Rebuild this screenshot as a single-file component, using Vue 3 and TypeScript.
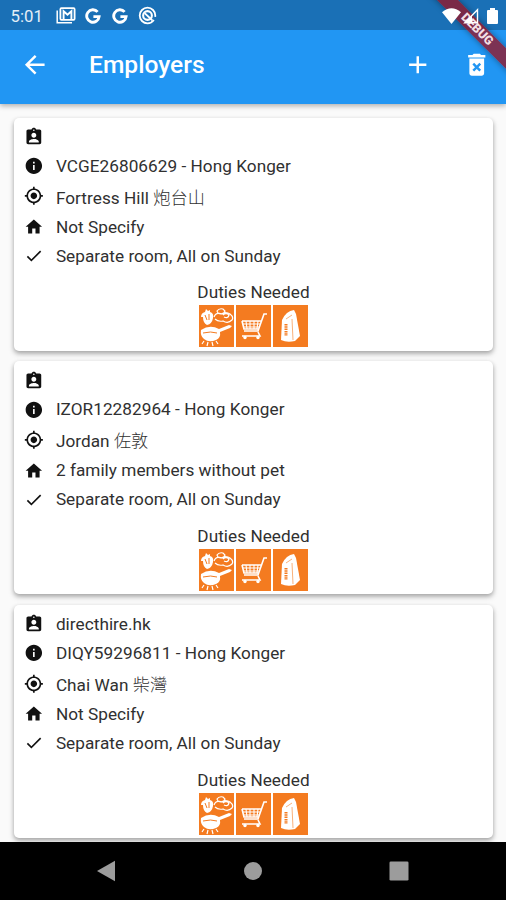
<script setup lang="ts">
type IconName = 'badge' | 'info' | 'location' | 'home' | 'check'

interface Row {
  icon: IconName
  text: string
  cjk?: string
}

interface Employer {
  id: string
  rows: Row[]
}

const paths: Record<IconName, string> = {
  badge:
    'M19 3h-4.18C14.4 1.84 13.3 1 12 1c-1.3 0-2.4.84-2.82 2H5c-1.1 0-2 .9-2 2v14c0 1.1.9 2 2 2h14c1.1 0 2-.9 2-2V5c0-1.1-.9-2-2-2zm-7 0c.55 0 1 .45 1 1s-.45 1-1 1-1-.45-1-1 .45-1 1-1zm0 4c1.66 0 3 1.34 3 3s-1.34 3-3 3-3-1.34-3-3 1.34-3 3-3zm6 12H6v-1.4c0-2 4-3.1 6-3.1s6 1.1 6 3.1V19z',
  info: 'M12 2C6.48 2 2 6.48 2 12s4.48 10 10 10 10-4.48 10-10S17.52 2 12 2zm1 15h-2v-6h2v6zm0-8h-2V7h2v2z',
  location:
    'M12 8c-2.21 0-4 1.79-4 4s1.79 4 4 4 4-1.79 4-4-1.79-4-4-4zm8.94 3c-.46-4.17-3.77-7.48-7.94-7.94V1h-2v2.06C6.83 3.52 3.52 6.83 3.06 11H1v2h2.06c.46 4.17 3.77 7.48 7.94 7.94V23h2v-2.06c4.17-.46 7.48-3.77 7.94-7.94H23v-2h-2.06zM12 19c-3.87 0-7-3.13-7-7s3.13-7 7-7 7 3.13 7 7-3.13 7-7 7z',
  home: 'M10 20v-6h4v6h5v-8h3L12 3 2 12h3v8z',
  check: 'M9 16.17L4.83 12l-1.42 1.41L9 19 21 7l-1.41-1.41z',
}

const makeEmployer = (id: string, name: string, place: string, cjk: string, family: string): Employer => ({
  id,
  rows: [
    { icon: 'badge', text: name },
    { icon: 'info', text: `${id} - Hong Konger` },
    { icon: 'location', text: `${place} `, cjk },
    { icon: 'home', text: family },
    { icon: 'check', text: 'Separate room, All on Sunday' },
  ],
})

const employers: Employer[] = [
  makeEmployer('VCGE26806629', '', 'Fortress Hill', '炮台山', 'Not Specify'),
  makeEmployer('IZOR12282964', '', 'Jordan', '佐敦', '2 family members without pet'),
  makeEmployer('DIQY59296811', 'directhire.hk', 'Chai Wan', '柴灣', 'Not Specify'),
]
</script>

<template>
  <div class="screen">
    <header class="top">
      <div class="status">
        <span class="time">5:01</span>
        <svg class="mail" viewBox="0 0 20 17">
          <path d="M1.2 3.5V15.8H16" fill="none" stroke="currentColor" stroke-width="1.5" />
          <rect x="4.4" y="1.2" width="14.2" height="11.6" rx="1" fill="none" stroke="currentColor" stroke-width="1.8" />
          <path d="M7.6 12V4.2l3.9 3.5 3.9-3.5V12" fill="none" stroke="currentColor" stroke-width="1.9" />
        </svg>
        <svg v-for="n in 2" :key="n" class="g" viewBox="0 0 16 16">
          <path d="M12.6 3.9A6.2 6.2 0 1 0 14.1 8.6H8.4" fill="none" stroke="currentColor" stroke-width="2.9" />
        </svg>
        <svg class="at" viewBox="0 0 20 20">
          <circle cx="10" cy="10" r="8.2" fill="none" stroke="currentColor" stroke-width="1.9" stroke-dasharray="48 3.5" stroke-dashoffset="-5" />
          <circle cx="10" cy="10" r="4.6" fill="none" stroke="currentColor" stroke-width="2.2" />
          <path d="M7 7.5l8 7.5" stroke="currentColor" stroke-width="2" />
        </svg>
        <span class="grow"></span>
        <svg class="wifi" viewBox="0 0 19 16"><path d="M0 4.3Q9.5-3.6 19 4.3L9.5 16z" /></svg>
        <svg class="signal" viewBox="0 0 16 16">
          <path d="M14.5 1.8V14.8H1.8z" fill="none" stroke="currentColor" stroke-width="1.4" />
          <path d="M9 7.4V15H1.5z" />
        </svg>
        <svg class="battery" viewBox="0 0 11 16"><path d="M3 0h5v2h2q1 0 1 1v12q0 1-1 1H1q-1 0-1-1V3q0-1 1-1h2z" /></svg>
      </div>
      <div class="bar">
        <svg class="action" viewBox="0 0 24 24"><path d="M20 11H7.83l5.59-5.59L12 4l-8 8 8 8 1.41-1.41L7.83 13H20v-2z" /></svg>
        <h1>Employers</h1>
        <svg class="action add" viewBox="0 0 24 24"><path d="M19 13h-6v6h-2v-6H5v-2h6V5h2v6h6v2z" /></svg>
        <svg class="action" viewBox="0 0 24 24">
          <path d="M6 19c0 1.1.9 2 2 2h8c1.1 0 2-.9 2-2V7H6v12zm2.46-7.12l1.41-1.41L12 12.59l2.12-2.12 1.41 1.41L13.41 14l2.12 2.12-1.41 1.41L12 15.41l-2.12 2.12-1.41-1.41L10.59 14l-2.13-2.12zM15.5 4l-1-1h-5l-1 1H5v2h14V4z" />
        </svg>
      </div>
      <div class="debug">DEBUG</div>
    </header>

    <main class="list">
      <article v-for="e in employers" :key="e.id" class="card">
        <div v-for="r in e.rows" :key="r.icon" class="row" :class="r.icon">
          <svg class="icon" viewBox="0 0 24 24"><path :d="paths[r.icon]" /></svg>
          <span>{{ r.text }}<span v-if="r.cjk" class="cjk">{{ r.cjk }}</span></span>
        </div>
        <div class="duties">
          <p>Duties Needed</p>
          <div class="tiles">
            <svg class="tile" viewBox="0 0 35 42">
              <rect width="35" height="42" fill="#f47b20" />
              <g fill="#fff">
                <path d="M2 12q0-4 4-5l1-3 2 2 2-1v2q4 1 3 6-1 6-6 7-4-2-4-8z" />
                <path d="M2 25q9-6 18-1l10-4 3 1-2 2-10 4q1 6-4 8-7 3-12-1-4-3-3-9z" />
              </g>
              <g fill="none" stroke="#fff" stroke-width="1.2">
                <path d="M15 12q2-5 7-3 5-3 9 0 4 3 2 6-4 4-9 1-5 1-8-2M18 6q2-3 6-2l2 2-2 3-5-1zM24 10q3-3 6 0-1 4-5 2" />
                <path d="M5 36l-2 3M9 37l-1 4M13 37l1 4M17 36l2 3" />
              </g>
              <g fill="none" stroke="#f47b20" stroke-width="1"><path d="M6 10l2 5M10 9v6M4 28q8-2 14 0" /></g>
            </svg>
            <svg class="tile" viewBox="0 0 35 42">
              <rect width="35" height="42" fill="#f47b20" />
              <g fill="none" stroke="#fff">
                <path stroke-width="1.6" d="M31 9h-3l-6 17H8M6 16h19M6 16l2 8h14M6 31h18l-2-4" />
                <path stroke-width="1.1" d="M7 19h17M7 22h16M10 16l1 8M14 16v8M18 16v8M22 16l-1 8" />
              </g>
              <g fill="#fff"><circle cx="9" cy="32.5" r="1.7" /><circle cx="22" cy="32.5" r="1.7" /></g>
            </svg>
            <svg class="tile" viewBox="0 0 35 42">
              <rect width="35" height="42" fill="#f47b20" />
              <path fill="#fff" d="M9 15q4-9 12-10l2 4 4 22-5 5q-8 2-14-1z" />
              <path fill="none" stroke="#f47b20" stroke-width=".6" d="M13 14l6-4M19 14l1 21" />
              <path fill="none" stroke="#f47b20" stroke-width="3" stroke-dasharray="1.5 .8" d="M13 19v12" />
            </svg>
          </div>
        </div>
      </article>
    </main>

    <nav class="nav">
      <svg viewBox="0 0 20 22"><path d="M1 11L19 .8v20.4z" /></svg>
      <svg viewBox="0 0 20 22"><circle cx="10" cy="11" r="9" /></svg>
      <svg viewBox="0 0 20 22"><rect x=".5" y="1.5" width="19" height="19" rx="1.3" /></svg>
    </nav>
  </div>
</template>

<style>
body {
  margin: 0;
}
</style>

<style scoped>
.screen {
  position: relative;
  width: 506px;
  height: 900px;
  overflow: hidden;
  display: flex;
  flex-direction: column;
  background: #fafafa;
  color: #303030;
  font-family: Roboto, 'Noto Sans CJK TC', sans-serif;
}
svg {
  display: block;
  flex: none;
  fill: currentColor;
}
.top {
  position: relative;
  flex: none;
  height: 104px;
  background: #2196f3;
  color: #fff;
  box-shadow: 0 2px 5px rgba(0, 0, 0, 0.3);
  z-index: 1;
}
.status {
  height: 30px;
  box-sizing: border-box;
  padding: 1px 8px 0 10.5px;
  display: flex;
  align-items: center;
  background: #1a70b6;
}
.time {
  width: 45.5px;
  font-size: 16.8px;
  color: #e4eef7;
}
.mail {
  width: 20px;
  height: 17px;
  margin-right: 9px;
}
.g {
  width: 16px;
  height: 16px;
  margin-right: 11px;
}
.at {
  width: 19px;
  height: 19px;
  margin-left: -1px;
}
.grow {
  flex: 1;
}
.wifi,
.signal,
.battery {
  position: relative;
  z-index: 2;
}
.wifi {
  width: 19px;
  height: 16px;
}
.signal {
  width: 16px;
  height: 16px;
  margin: 0 8px 0 2px;
}
.battery {
  width: 11px;
  height: 16px;
}
.bar {
  height: 70px;
  padding: 0 14.5px 0 20px;
  display: flex;
  align-items: center;
}
.action {
  width: 29.5px;
  height: 29.5px;
}
.add {
  margin-right: 29.5px;
}
h1 {
  flex: 1;
  margin: 0 0 0 39.5px;
  font-size: 24.6px;
  line-height: 30px;
  font-weight: 500;
}
.list {
  flex: 1;
  min-height: 0;
  overflow: hidden;
  padding: 13.5px 13px 0 14px;
  display: flex;
  flex-direction: column;
  gap: 10.5px;
}
.card {
  flex: none;
  box-sizing: border-box;
  height: 233.2px;
  padding: 4.8px 10px 0;
  border-radius: 5px;
  background: #fff;
  box-shadow: 0 2px 4px rgba(0, 0, 0, 0.24), 0 3px 6px rgba(0, 0, 0, 0.16);
}
.row {
  height: 29px;
  display: flex;
  align-items: center;
  gap: 12.2px;
  font-size: 17.2px;
  letter-spacing: 0.04px;
  white-space: pre;
}
.row.location {
  height: 32px;
}
.icon {
  width: 19.7px;
  height: 19.7px;
  color: #111;
}
.cjk {
  font-weight: 300;
  letter-spacing: 0;
}
.duties {
  margin-top: 11px;
  display: flex;
  flex-direction: column;
  align-items: center;
}
p {
  margin: 0;
  font-size: 17.2px;
  line-height: 23px;
  letter-spacing: 0.04px;
}
.tiles {
  margin-top: 1px;
  display: flex;
  gap: 2px;
}
.tile {
  width: 35px;
  height: 42px;
}
.nav {
  flex: none;
  height: 58px;
  box-sizing: border-box;
  padding: 0 97px 0 96px;
  display: flex;
  align-items: center;
  justify-content: space-between;
  background: #000;
  color: #9c9c9c;
  z-index: 1;
}
.nav svg {
  width: 20px;
  height: 22px;
}
.debug {
  position: absolute;
  z-index: 1;
  left: 417px;
  top: 22px;
  width: 120px;
  height: 15px;
  transform: rotate(45deg);
  background: rgba(150, 22, 38, 0.78);
  box-shadow: 0 0 6px rgba(0, 0, 0, 0.4);
  color: #f3dfe4;
  font-size: 12.3px;
  line-height: 15px;
  font-weight: 900;
  text-align: center;
}
</style>
